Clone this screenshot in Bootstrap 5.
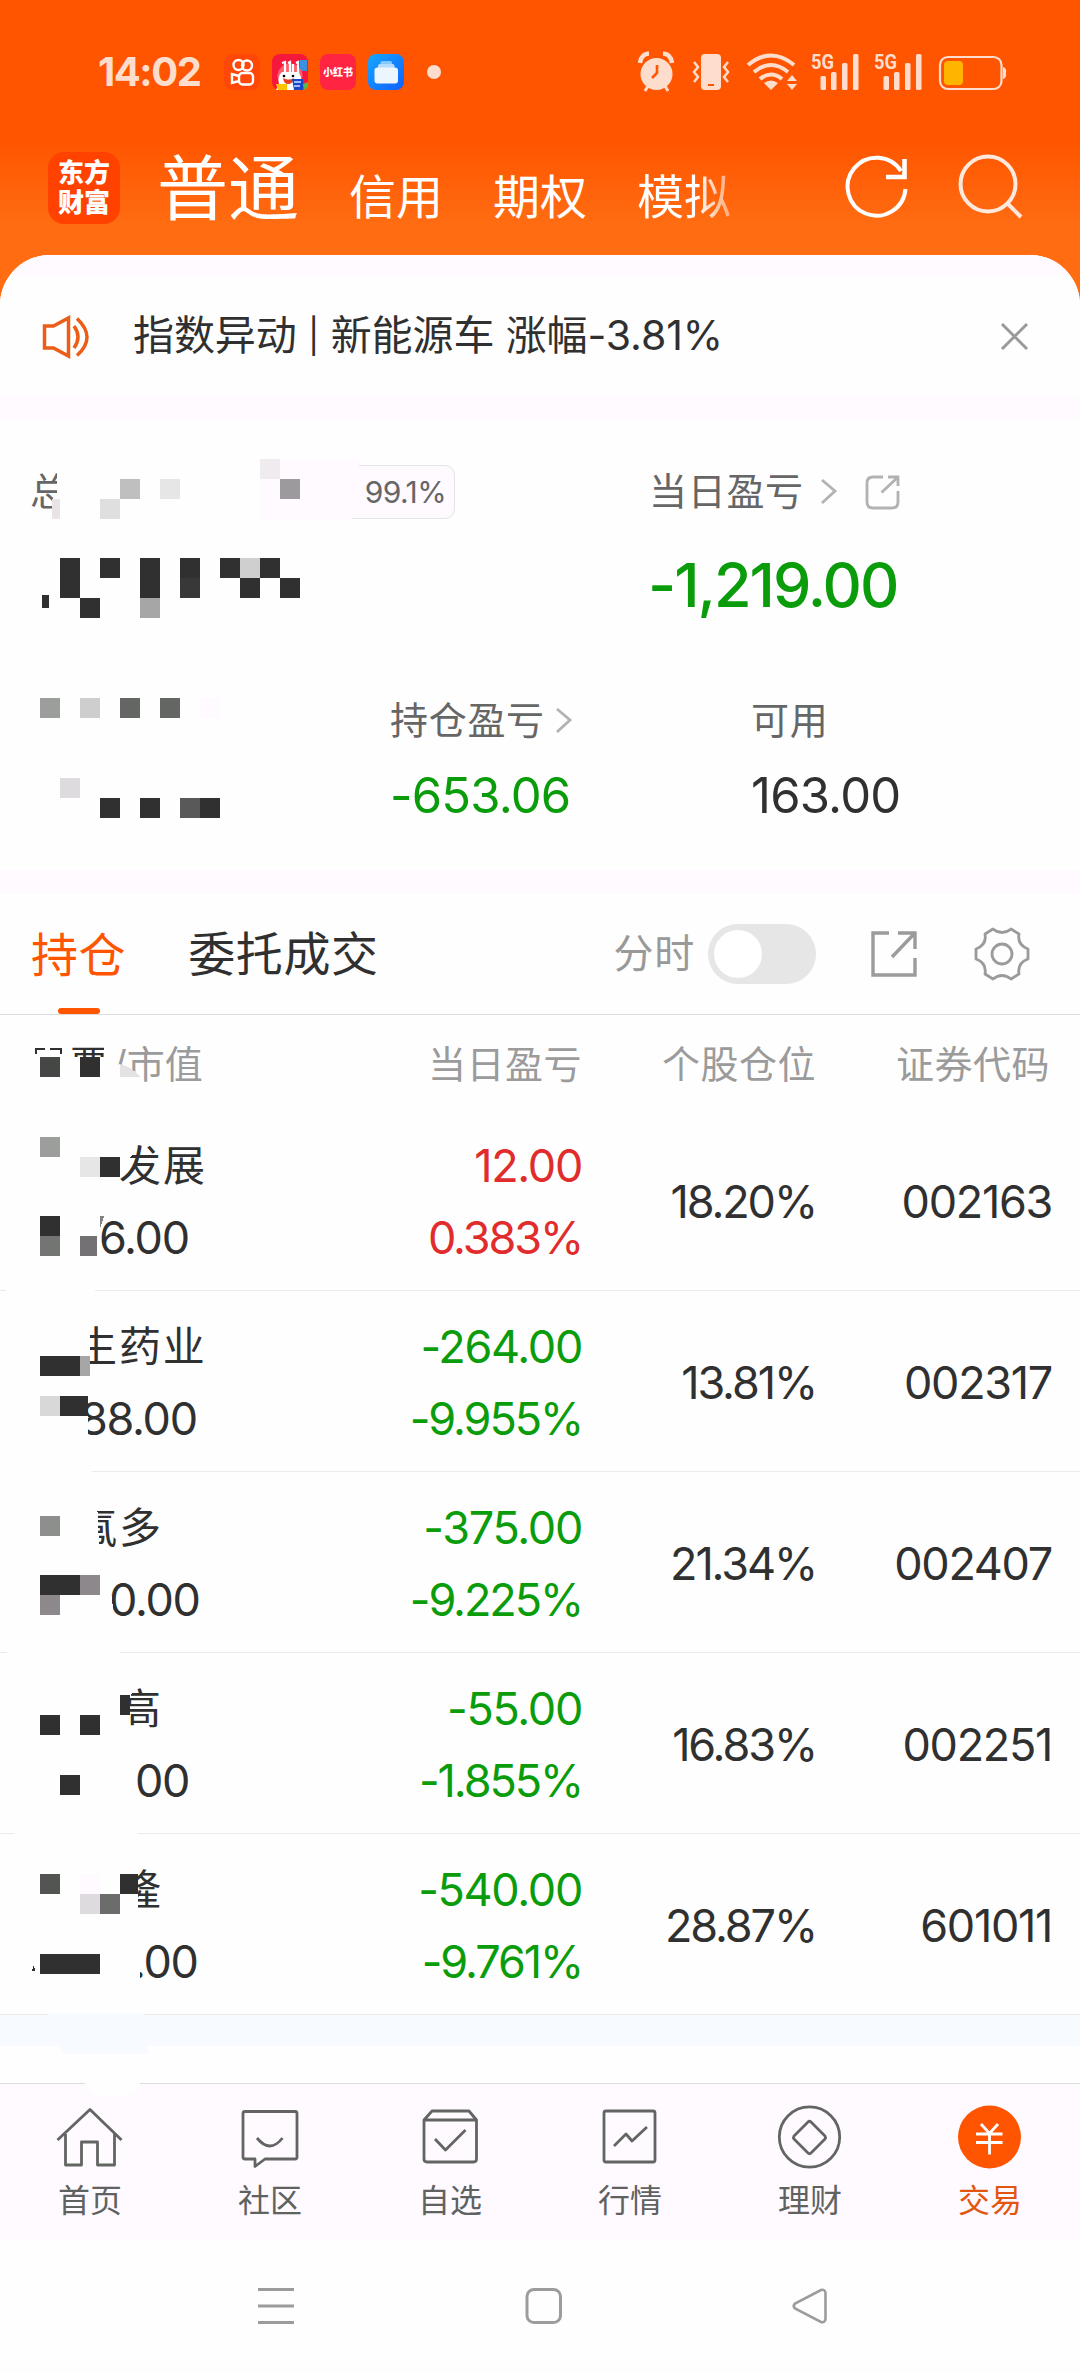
<!DOCTYPE html>
<html lang="zh-CN">
<head>
<meta charset="utf-8">
<meta name="viewport" content="width=device-width, initial-scale=1">
<title>交易</title>
<link href="https://cdn.jsdelivr.net/npm/bootstrap@5.3.0/dist/css/bootstrap.min.css" rel="stylesheet">
<style>
  html,body{height:2373px;overflow:hidden}
  body{font-family:Inter,"Noto Sans CJK SC",sans-serif;color:#303030;background:#fff;}
  .phone{width:1080px;height:2373px;overflow:hidden;background:#fefefe;font-weight:400}
  .phone svg{display:block;flex:none;overflow:visible}
  .topzone{height:305px;background:linear-gradient(#f50 0,#f50 140px,#ff6c12 225px,#ff6c12 100%)}
  .statusbar{height:144px;padding:0 74px 0 98px}
  .clock{font-size:40px;font-weight:700;color:#ffddcc;letter-spacing:-1.5px;line-height:48px;width:126px}
  .brandrow{height:111px;padding:0 53px 24px 48px}
  .brand{width:72px;height:72px;border-radius:16px;background:#ff4200;color:#fff;font-size:26px;line-height:30px;font-weight:900;text-align:center;padding-top:6px}
  .tab-main{font-size:71px;line-height:80px;color:#fff;margin-left:37px;width:192px}
  .tab-sub{font-size:47px;line-height:60px;color:#fff;width:144px;padding-top:18px}
  .fade-end{background:linear-gradient(90deg,#fff 60px,rgba(255,255,255,.35) 98px);-webkit-background-clip:text;background-clip:text;color:transparent;width:206px}
  .sheet{margin-top:-50px;border-radius:50px 50px 0 0;background:#fefefe}
  .sheet-cap{height:20px;background:#fefaff}
  .cap-wrap{border-radius:50px 50px 0 0;overflow:hidden;height:141px;background:#fefefe}
  .notice{height:121px;padding:2px 52px 0 43px}
  .notice-text{font-size:41px;margin-left:44px;line-height:60px;letter-spacing:-.1px}
  .notice-text span{font-size:34px;position:relative;top:-2px}
  .band{height:24px;background:#fefaff}
  .assets{height:450px;padding-top:43px}
  .lab{font-size:38px;line-height:56px;color:#666;letter-spacing:.7px}
  .grn{color:#0a9c0a}.rd{color:#e02c2c}
  .big{font-size:61px;line-height:80px;font-weight:500;letter-spacing:-2px}
  .mid{font-size:49px;line-height:64px;letter-spacing:-.8px}
  .pct-tag{width:195px;height:54px;border:1.5px solid #e4e4e6;border-radius:10px;background:#fefaff;font-size:30px;color:#666;line-height:53px;text-align:right;padding-right:8px;letter-spacing:-.6px;margin-top:2px}
  .seg{height:121px;border-bottom:1px solid #dedede;padding:0 50px 0 31px}
  .seg-tab{font-size:47px;line-height:122px;letter-spacing:.6px}
  .seg-tab.on{color:#f50;}
  .seg-tab.on::after{content:"";display:block;width:42px;height:6px;border-radius:3px;background:#f50;margin:-8px auto 0}
  .toggle{width:108px;height:60px;border-radius:30px;background:#e6e6e7;padding:6px}
  .toggle i{display:block;width:48px;height:48px;border-radius:50%;background:#fff}
  .c1{width:348px;padding-left:31px}.c2{width:234px}.c3{width:234px}.c4{width:236px}
  .heads{height:95px;font-size:38px;color:#9b9b9b;line-height:98px;letter-spacing:.5px}
  .hold{height:181px;border-bottom:1px solid #ebebeb;font-size:45px;letter-spacing:-1.3px;padding-top:4px}
  .pc{letter-spacing:-2.1px}
  .hold .l{line-height:72px;white-space:pre}
  .nm{font-size:42px;letter-spacing:1.9px}
  .tabbar{height:158px;background:#fefaff;border-top:1px solid #dcdcdc;padding-top:21px}
  .tabbar div{width:180px;font-size:32px;line-height:52px;color:#5f625f}
  .ico{fill:none;stroke:#636563;stroke-width:2.8;stroke-linejoin:round}
  .sys{height:131px}
  .masks{left:0;top:0;pointer-events:none}
</style>
</head>
<body>
<div class="phone position-relative">
  <header class="topzone">
    <div class="statusbar d-flex align-items-center">
      <div class="clock">14:02</div>
      <svg width="220" height="36" viewBox="224 54 220 36">
        <rect x="224" y="54" width="36" height="36" rx="9" fill="#ff4708"/>
        <g fill="none" stroke="#fff" stroke-width="2.4"><circle cx="238.500" cy="65" r="5"/><circle cx="247" cy="65.500" r="5"/><rect x="239" y="73" width="14" height="11.500" rx="3.500"/><path d="M239 76l-7-2v9l7-2"/></g>
        <rect x="272" y="54" width="36" height="36" rx="8" fill="#f5173c"/>
        <path d="M300 60h7v11h-7z" fill="#3c90e0"/><circle cx="290" cy="76" r="12.500" fill="#ff5f6c"/>
        <path d="M279 84q-2-8 3-12l16 0q5 4 2 12l2 6h-26z" fill="#fff"/>
        <path d="M282 63l3-1v12M288 63l2-1v11M293 73V64M296 63l2-1v12" stroke="#fff" stroke-width="2.200" fill="none"/>
        <path d="M283 78q6 3 11 0q-1 6-6 6q-4 0-5-6z" fill="#e8401c"/><circle cx="284" cy="76" r="1.300"/><circle cx="293" cy="76" r="1.300"/>
        <path d="M276 84h11v6h-9z" fill="#ffc400"/><path d="M292 79h11v11h-9z" fill="#1747c8"/><path d="M294 82h7M294 86h6" stroke="#cfe0ff" stroke-width="1.500"/><path d="M303 84l5-2v5l-4 3z" fill="#54b94d"/>
        <rect x="320" y="54" width="36" height="36" rx="8" fill="#ff2442"/>
        <text x="338" y="76" text-anchor="middle" font-size="10" font-weight="900" fill="#fff">小红书</text>
        <defs><linearGradient id="files" x2="1" y2="1"><stop stop-color="#17a7ff"/><stop offset="1" stop-color="#1060ff"/></linearGradient></defs>
        <rect x="368" y="54" width="36" height="36" rx="8" fill="url(#files)"/>
        <rect x="380.500" y="61" width="11.500" height="4" rx="1.500" fill="#85c8ff"/><rect x="378" y="64" width="16.500" height="5" rx="2" fill="#b5dcff"/><rect x="374.500" y="67.500" width="23.500" height="16" rx="3" fill="#edf5ff"/>
        <circle cx="434" cy="72" r="7" fill="#ffddcc"/>
      </svg>
      <svg class="ms-auto" width="370" height="40" viewBox="636 52 370 40" fill="#ffddcc">
        <circle cx="656.500" cy="74" r="16"/><path d="M640 63q1-9 9-9.500M672 63q-1-9-9-9.500" fill="none" stroke="#ffddcc" stroke-width="4.500"/><path d="M648 86l-3 5M665 86l3 5" stroke="#ffddcc" stroke-width="3"/><path d="M657 65v8l-5 5" fill="none" stroke="#f50" stroke-width="2.600"/>
        <rect x="701" y="54" width="20" height="36" rx="4"/><path d="M708 85h6" stroke="#f50" stroke-width="2"/>
        <path d="M694 62l4 5-4 5 4 5-4 5M728 62l-4 5 4 5-4 5 4 5" fill="none" stroke="#ffddcc" stroke-width="2.500"/>
        <g fill="none" stroke="#ffddcc" stroke-width="4"><path d="M748 65q23-19 46 0M754 72q17-14 34 0M760 79q11-9 22 0" /></g>
        <path d="M764 83q7-5 14 0l-7 7zM787 81l5-6 5 6zM787 84l5 6 5-6z"/>
        <g id="sig"><text x="811" y="69" font-family="Roboto" font-weight="700" font-size="20" textLength="23" lengthAdjust="spacingAndGlyphs">5G</text>
        <rect x="820.500" y="76" width="5.500" height="14" rx="1.500"/><rect x="831" y="72" width="5.500" height="18" rx="1.500"/><rect x="842" y="63" width="5.500" height="27" rx="1.500"/><rect x="853" y="54" width="5.500" height="36" rx="1.500"/></g>
        <use href="#sig" x="63"/>
        <rect x="940" y="57" width="61.500" height="32" rx="8" fill="none" stroke="#ffddcc" stroke-width="2.200"/><path d="M1003 67q4 1 3 6q1 5-3 6z"/><rect x="944" y="61" width="19" height="24" rx="4" fill="#ffb400"/>
      </svg>
    </div>
    <div class="brandrow d-flex align-items-center">
      <div class="brand">东方<br>财富</div>
      <div class="tab-main">普通</div>
      <div class="tab-sub">信用</div>
      <div class="tab-sub">期权</div>
      <div class="tab-sub fade-end">模拟</div>
      <svg class="ms-auto" width="184" height="66" viewBox="842 155 184 66" fill="none" stroke="#fff" stroke-width="4">
        <path d="M904.500 189A29 29 0 1 1 900 171"/><path d="M885 177h18.500V159" stroke-width="4.600"/>
        <g stroke="#ffe9de"><circle cx="987" cy="184" r="27.500"/><path d="M1006 203l14 14"/></g>
      </svg>
    </div>
  </header>

  <main class="sheet">
    <div class="cap-wrap">
      <div class="sheet-cap"></div>
      <div class="notice d-flex align-items-center">
        <svg width="46" height="42" viewBox="43 315 46 42" fill="none" stroke="#ec5e17" stroke-width="3.500"><path d="M44.500 325h9l15-8v38l-15-8h-9zM74 325q8 11 0 22M77 317.500q20 19 0 37"/></svg>
        <div class="notice-text">指数异动 <span>|</span> 新能源车 涨幅-3.81%</div>
        <svg class="ms-auto" width="27" height="27" viewBox="0 0 27 27" stroke="#999" stroke-width="3"><path d="M1 1l25 25M26 1L1 26"/></svg>
      </div>
    </div>
    <div class="band"></div>

    <section class="assets">
      <div class="d-flex">
        <div class="d-flex" style="width:649px">
          <div class="lab" style="width:260px;padding-left:30px">总</div>
          <div class="pct-tag">99.1%</div>
        </div>
        <div class="lab d-flex align-items-center">当日盈亏
          <svg class="ms-3" width="17" height="28" viewBox="0 0 17 28" fill="none" stroke="#b3b1b3" stroke-width="2.800"><path d="M2 3l13 11L2 26"/></svg>
          <svg style="margin-left:28px" width="35" height="35" viewBox="865 474 35 35" fill="none" stroke="#b3b1b3" stroke-width="2.800"><path d="M883 477h-10q-6 0-6 6v19q0 6 6 6h19q6 0 6-6v-11M888 477h10v9M881.500 492.500l16-15"/></svg>
        </div>
      </div>
      <div class="big grn" style="padding-left:648px;margin-top:26px">-1,219.00</div>
      <div class="d-flex" style="padding-top:67px">
        <div style="width:390px"></div>
        <div style="width:361px">
          <div class="lab d-flex align-items-center">持仓盈亏 <svg style="margin-left:10px" width="17" height="28" viewBox="0 0 17 28" fill="none" stroke="#b3b1b3" stroke-width="2.800"><path d="M2 3l13 11L2 26"/></svg></div>
          <div class="mid grn mt-3">-653.06</div>
        </div>
        <div><div class="lab">可用</div><div class="mid mt-3">163.00</div></div>
      </div>
    </section>
    <div class="band"></div>

    <section>
      <div class="seg d-flex align-items-center">
        <div class="seg-tab on" style="height:121px">持仓</div>
        <div class="seg-tab" style="margin-left:62px">委托成交</div>
        <div class="ms-auto" style="font-size:40px;color:#999;letter-spacing:.8px">分时</div>
        <div class="toggle" style="margin-left:13px"><i></i></div>
        <svg style="margin-left:55px" width="46" height="46" viewBox="871 931 46 46" fill="none" stroke="#9c9a9c" stroke-width="3.400"><path d="M889 933h-16v42h42v-17M898 933h17v16M892 957l22-23"/></svg>
        <svg style="margin-left:57px" width="56" height="56" viewBox="974 926 56 56" fill="none" stroke="#9c9a9c" stroke-width="2.800" stroke-linejoin="round"><circle cx="1002" cy="954" r="10"/><path d="M993 929Q1002 936 1011 929L1019 934Q1017 945 1028 949V959Q1017 963 1019 974L1011 979Q1002 972 993 979L985 974Q987 963 976 959V949Q987 945 985 934Z"/></svg>
      </div>
      <div class="heads d-flex text-end">
        <div class="c1 text-start" style="padding-left:70px;letter-spacing:0"><span style="color:#303030;letter-spacing:4px">票</span><span style="margin-left:1px">/</span>市值</div><div class="c2">当日盈亏</div><div class="c3">个股仓位</div><div class="c4" style="padding-right:2px">证券代码</div>
      </div>
      <div class="hold d-flex align-items-center text-end">
        <div class="c1 text-start"><div class="l nm" style="padding-left:88px">发展</div><div class="l" style="padding-left:68px">6.00</div></div>
        <div class="c2 rd"><div class="l">12.00</div><div class="l pc">0.383%</div></div><div class="c3 pc">18.20%</div><div class="c4">002163</div>
      </div>
      <div class="hold d-flex align-items-center text-end">
        <div class="c1 text-start"><div class="l nm" style="padding-left:44px">生药业</div><div class="l" style="padding-left:49px">88.00</div></div>
        <div class="c2 grn"><div class="l">-264.00</div><div class="l pc">-9.955%</div></div><div class="c3 pc">13.81%</div><div class="c4">002317</div>
      </div>
      <div class="hold d-flex align-items-center text-end">
        <div class="c1 text-start"><div class="l nm" style="padding-left:44px">氟多</div><div class="l" style="padding-left:78px">0.00</div></div>
        <div class="c2 grn"><div class="l">-375.00</div><div class="l pc">-9.225%</div></div><div class="c3 pc">21.34%</div><div class="c4">002407</div>
      </div>
      <div class="hold d-flex align-items-center text-end">
        <div class="c1 text-start"><div class="l nm" style="padding-left:88px">高</div><div class="l" style="padding-left:104px">00</div></div>
        <div class="c2 grn"><div class="l">-55.00</div><div class="l pc">-1.855%</div></div><div class="c3 pc">16.83%</div><div class="c4">002251</div>
      </div>
      <div class="hold d-flex align-items-center text-end">
        <div class="c1 text-start"><div class="l nm" style="padding-left:88px">隆</div><div class="l" style="padding-left:102px">.00</div></div>
        <div class="c2 grn"><div class="l">-540.00</div><div class="l pc">-9.761%</div></div><div class="c3 pc">28.87%</div><div class="c4">601011</div>
      </div>
      <div style="height:31px;background:#f7faff"></div>
      <div style="height:37px"></div>
    </section>
  </main>

  <nav class="tabbar d-flex text-center">
    <div><svg class="ico mx-auto" width="64" height="70" viewBox="58 2106 64 70"><path d="M57.500 2141L90 2110.500l31.500 30.500M65.500 2135v31h16v-23h16v23h17v-31"/></svg>首页</div>
    <div><svg class="ico mx-auto" width="64" height="70" viewBox="238 2106 64 70"><path d="M245 2112.500h50q2 0 2 2v43.500q0 2-2 2h-30l-10 7.500v-7.500h-10q-2 0-2-2v-43.500q0-2 2-2zM257 2139q13 16 25.500 0"/></svg>社区</div>
    <div><svg class="ico mx-auto" width="64" height="70" viewBox="417 2106 64 70"><path d="M423 2121l8-9h37l7.500 9v39q0 3-3 3h-46.500q-3 0-3-3zh52.500M434 2140l10.500 11 20-20"/></svg>自选</div>
    <div><svg class="ico mx-auto" width="64" height="70" viewBox="598 2106 64 70"><rect x="604" y="2112" width="51" height="51" rx="2"/><path d="M614 2147l12-12 6 7 15-14"/></svg>行情</div>
    <div><svg class="ico mx-auto" width="64" height="70" viewBox="778 2106 64 70"><circle cx="809.500" cy="2138" r="30.200"/><path d="M808 2123q1.500-1.500 3 0l14 14q1 1.500 0 3l-14 14q-1.500 1.500-3 0l-14-14q-1-1.500 0-3z"/></svg>理财</div>
    <div style="color:#e2560f"><svg class="mx-auto" width="64" height="70" viewBox="958 2106 64 70"><circle cx="989.500" cy="2138" r="31.500" fill="#f50"/><path d="M981 2125l8.500 9.500 8.500-9.500M989.500 2134v21.500M976 2135h26.500M976 2143.500h26.500" fill="none" stroke="#fff" stroke-width="2.800"/></svg>交易</div>
  </nav>
  <div class="sys">
    <svg width="1080" height="131" viewBox="0 2242 1080 131" fill="none" stroke="#9c9c9c" stroke-width="3"><path d="M258 2290.500h36M258 2307h36M258 2323.500h36"/><rect x="527" y="2290.500" width="33.500" height="33" rx="7"/><path d="M795 2304.500q-2.500 2.500 0 5l26 13.500q4 1 4.500-3v-26q-.5-4-4.500-3z" stroke-width="2.600"/></svg>
  </div>

  <svg class="masks position-absolute" width="1080" height="2373" viewBox="0 0 1080 2373" shape-rendering="crispEdges">
    <!-- erased areas -->
    <g fill="#fefefe">
      <path d="M57 465h60v55H57zM53 498h10v22h-10zM217 455h43v72h-43z"/>
      <path d="M30 1057h85v30H30zM104 1040h9v40h-9z"/><path d="M116 1066l4 -2 20 13v10h-30z"/>
      <path d="M110 1140h26l-4 15-12 12h-10zM90 1216h8v45h-8z"/>
      <path d="M60 1310h30v70H60zM70 1385h18v60H70zM6 1288h89v6H6zM0 1469h92v6H0zM7 1650h113v6H7zM14 1831h124v6H14z"/>
      <path d="M60 1500h37l3 70H60zM98 1585h12l5 38H98z"/><path d="M115 1685h22l-8 13v40h-14z"/>
      <path d="M110 1870h28v55h-28zM125 1960h15v30h-15z"/><path d="M82 2080h59l-5 12-12 4h-28z"/>
    </g>
    <path d="M48 2013h96v14h4v27H63l-5-10z" fill="#f7faff"/>
    <path d="M260 459h99v7h-7v53H260z" fill="#fefaff"/>
    <g id="mosaic"></g>
    <path d="M42 595h7v13h-7zM32 1971l2-7 1 7zM35 1048h10v2h-8v4h-2zM50 1048h12v6h-2v-4H50z" fill="#303030"/>
    <path d="M120 1064q12 3 20 13h-20z" fill="#e4e2e5"/><path d="M100 1216h4l-4 13z" fill="#808380"/>
  </svg>
</div>
<script>
  // x, y, colour, width and height of every privacy block
  const D='#303030';
  const blocks=[[260,459,'#f0ebef'],[120,479,'#bfbfbf'],[160,479,'#e6e6e6'],[280,479,'#9d9a9d'],[52,499,'#e8e3e7',8],[100,499,'#dfdfdf'],
  [60,558,D,20,40],[100,558,D],[140,558,D,20,40],[180,558,D],[220,558,D],[240,558,'#cfcfcf'],[260,558,D],[180,578,'#383838'],[240,578,D],[280,578,D],[80,598,D],[140,598,'#a6a6a6'],
  [40,698,'#9c9e9c'],[80,698,'#cecece'],[120,698,'#636663'],[160,698,'#636663'],[200,698,'#fffaff'],[60,778,'#dedbde'],[100,798,D],[140,798,D],[180,798,'#595959'],[200,798,D],
  [40,1057,'#444744'],[80,1057,D],[40,1137,'#9c9e9c'],[80,1157,'#e6e6e6'],[100,1157,D],[40,1216,D],[40,1236,'#727572'],[80,1236,'#737173',17],
  [40,1356,D,40],[80,1356,'#a6a6a6',10],[40,1396,'#d8d8d8'],[60,1396,D,28],[40,1516,'#8c8f8c'],[40,1575,D,40],[80,1575,'#8c888c'],[40,1595,'#8c888c'],
  [120,1695,D,10],[40,1715,D],[80,1715,D],[60,1775,D],[40,1874,'#525552'],[80,1874,'#fffaff'],[120,1874,D,18],[80,1894,'#dedbde'],[100,1894,'#6b6d6b'],[40,1954,D,60]];
  document.getElementById('mosaic').innerHTML=blocks.map(([x,y,c,w=20,h=20])=>`<rect x="${x}" y="${y}" width="${w}" height="${h}" fill="${c}"/>`).join('');
</script>
<script src="https://cdn.jsdelivr.net/npm/bootstrap@5.3.0/dist/js/bootstrap.bundle.min.js"></script>
</body>
</html>
